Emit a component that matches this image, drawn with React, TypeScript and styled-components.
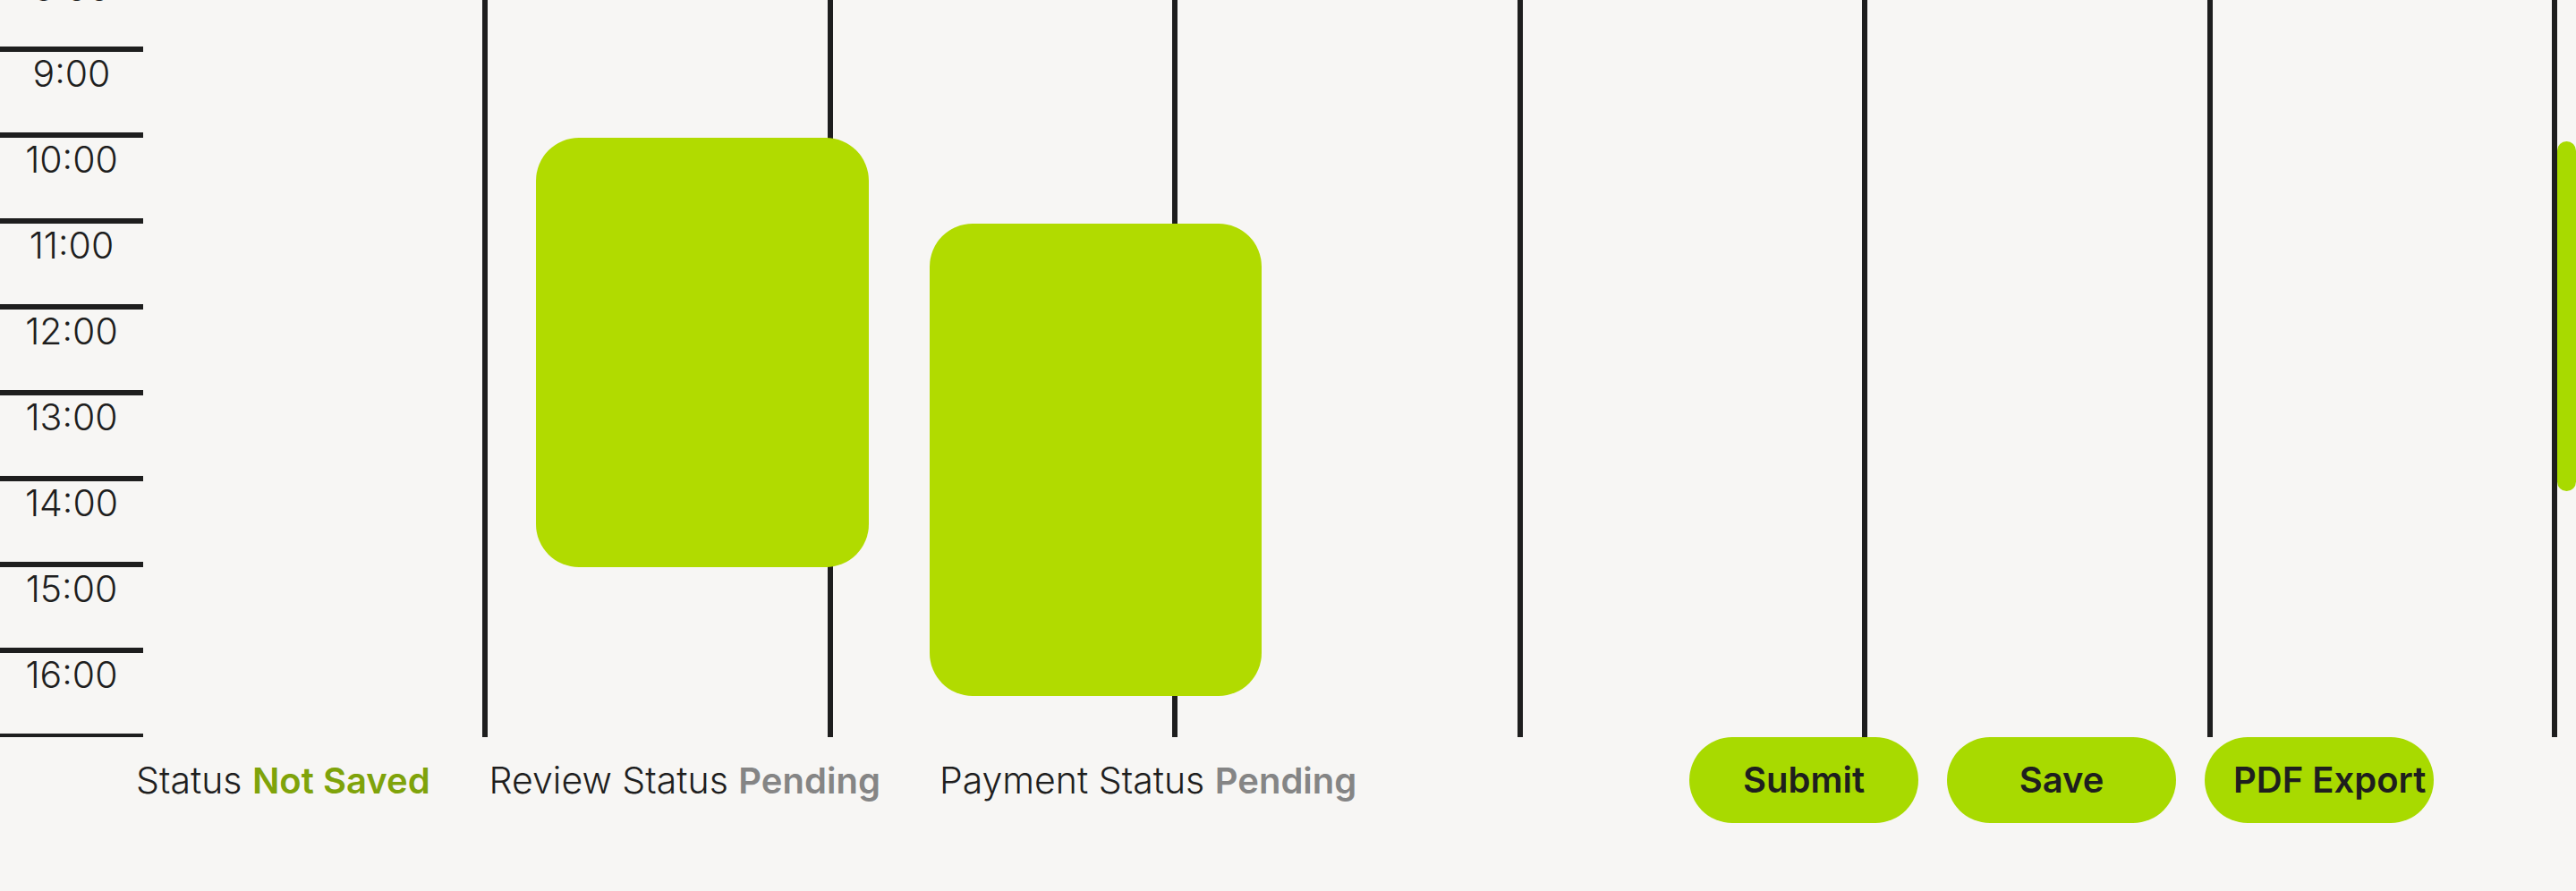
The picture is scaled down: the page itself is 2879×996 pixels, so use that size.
import React from "react";
import styled, { createGlobalStyle } from "styled-components";

const HOUR = 96;
const FIRST_HOUR = 8;
const LINE = 6;
const ink = "#1e1e1e";
const lime = "#a8da00";

const GlobalStyle = createGlobalStyle`
  *, *::before, *::after { box-sizing: border-box; }
  body {
    margin: 0;
    background: #f7f6f4;
    color: ${ink};
    font-family: Inter, "Liberation Sans", sans-serif;
    font-size: 41px;
    font-weight: 300;
    line-height: 48px;
  }
`;

const Page = styled.main`
  display: flex;
  flex-direction: column;
  height: 100vh;
`;

const Viewport = styled.div`
  display: flex;
  flex: 1;
  min-height: 0;
  overflow: hidden;
`;

/* The calendar is scrolled 44px down into its first hour. */
const Calendar = styled.section`
  display: flex;
  flex: 1;
  align-self: flex-start;
  margin-top: -44px;
`;

const Hours = styled.ol`
  flex: none;
  width: 160px;
  margin: 0;
  padding: 0;
  list-style: none;
  border-bottom: ${LINE}px solid ${ink};
`;

const Hour = styled.li`
  height: ${HOUR}px;
  border-top: ${LINE}px solid ${ink};
  text-align: center;
`;

const Days = styled.div`
  display: grid;
  grid-template-columns: repeat(7, 1fr);
  flex: 1;
`;

const Day = styled.div`
  position: relative;
  border-right: ${LINE}px solid ${ink};
`;

const Event = styled.article<{ $start: number; $length: number; $shift: number }>`
  position: absolute;
  z-index: 1;
  top: ${(p) => (p.$start - FIRST_HOUR) * HOUR + LINE}px;
  left: ${(p) => p.$shift}px;
  width: calc(100% - 8px);
  height: ${(p) => p.$length * HOUR}px;
  border-radius: 48px;
  background: #b1db00;
`;

const Track = styled.div`
  flex: none;
  width: 21px;
  padding-top: 158px;
`;

const Thumb = styled.div`
  height: 391px;
  border-radius: 11px;
  background: ${lime};
`;

const Footer = styled.footer`
  display: flex;
  flex: none;
  justify-content: space-between;
  align-items: center;
  padding: 0 159px 76px 152px;
`;

const Statuses = styled.div`
  display: flex;
  gap: 66px;
  white-space: nowrap;
`;

const Status = styled.p`
  margin: 0;
`;

const Value = styled.strong<{ $color: string }>`
  font-size: 40px;
  font-weight: 600;
  color: ${(p) => p.$color};
`;

const Actions = styled.div`
  display: flex;
  gap: 32px;
`;

const Button = styled.button`
  width: 256px;
  height: 96px;
  padding: 0 32px;
  border: 0;
  border-radius: 48px;
  background: ${lime};
  color: ${ink};
  font: inherit;
  font-size: 40px;
  font-weight: 600;
  white-space: nowrap;
  cursor: pointer;
`;

const hours = [8, 9, 10, 11, 12, 13, 14, 15, 16];

const days = [
  { name: "Monday" },
  { name: "Tuesday", event: { start: 10, length: 5, shift: 54 } },
  { name: "Wednesday", event: { start: 11, length: 5.5, shift: 108 } },
  { name: "Thursday" },
  { name: "Friday" },
  { name: "Saturday" },
  { name: "Sunday" },
];

const statuses = [
  { label: "Status", value: "Not Saved", color: "#7fa30a" },
  { label: "Review Status", value: "Pending", color: "#858585" },
  { label: "Payment Status", value: "Pending", color: "#858585" },
];

export default function App() {
  return (
    <>
      <GlobalStyle />
      <Page>
        <Viewport>
          <Calendar>
            <Hours>
              {hours.map((h) => (
                <Hour key={h}>{h}:00</Hour>
              ))}
            </Hours>
            <Days>
              {days.map(({ name, event }) => (
                <Day key={name}>
                  {event && (
                    <Event $start={event.start} $length={event.length} $shift={event.shift} />
                  )}
                </Day>
              ))}
            </Days>
          </Calendar>
          <Track>
            <Thumb />
          </Track>
        </Viewport>
        <Footer>
          <Statuses>
            {statuses.map((s) => (
              <Status key={s.label}>
                {s.label} <Value $color={s.color}>{s.value}</Value>
              </Status>
            ))}
          </Statuses>
          <Actions>
            <Button type="button">Submit</Button>
            <Button type="button">Save</Button>
            <Button type="button">PDF Export</Button>
          </Actions>
        </Footer>
      </Page>
    </>
  );
}
